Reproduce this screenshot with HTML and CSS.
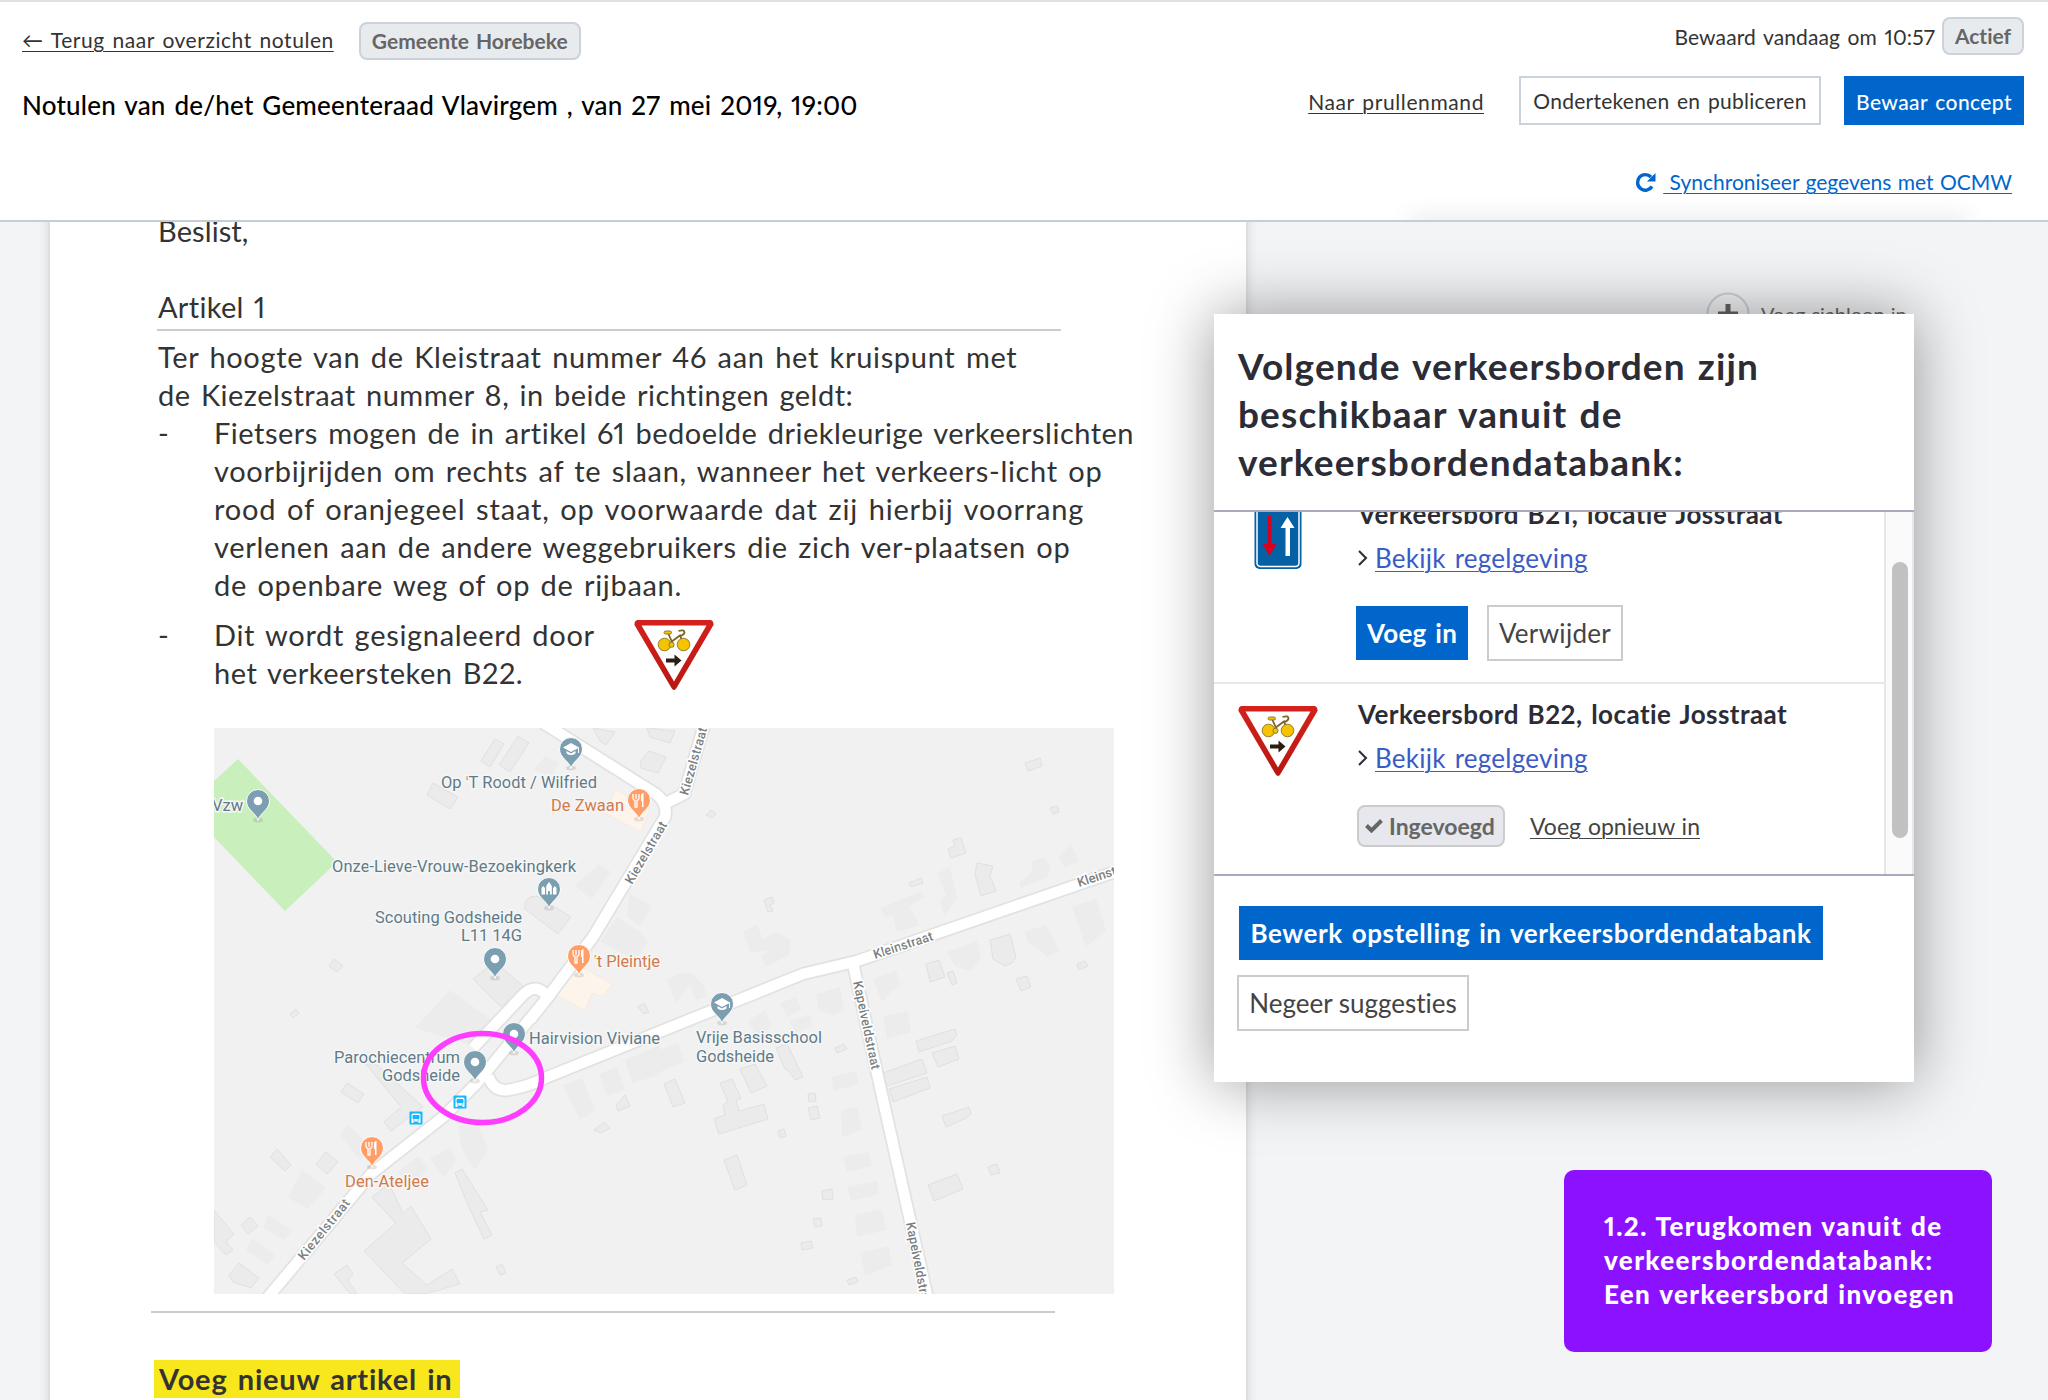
FILE: index.html
```html
<!DOCTYPE html>
<html lang="nl">
<head>
    <meta charset="UTF-8">
    <meta name="viewport" content="width=device-width, initial-scale=1.0">
    <title>Notulen - Gemeenteraad Vlavirgem</title>
    <link rel="stylesheet" href="styles.css">
</head>
<body>
    <!-- Shared drawings -->
    <svg class="defs" width="0" height="0">
        <defs>
            <linearGradient id="signRed" x1="0" y1="0" x2="0" y2="1">
                <stop offset="0" stop-color="#d4211c"/>
                <stop offset="1" stop-color="#b81712"/>
            </linearGradient>
            <symbol id="b22" viewBox="0 0 80 70">
                <path d="M3 0H77Q80 1 79.500 5L42.500 68Q40 72 37.500 68L.5 5Q0 1 3 0Z" fill="url(#signRed)"/>
                <path d="M7.500 5.500H72.500L40 61.500Z" fill="#fff"/>
                <g fill="#f5c400" stroke="#7d6420" stroke-width=".8">
                    <path d="M34.500 14L38.500 23M37 22L46 15.500L49.500 24" fill="none" stroke-width="1.800"/>
                    <circle cx="30.500" cy="24.500" r="6.300"/>
                    <circle cx="49.500" cy="24.500" r="6.300"/>
                    <circle cx="37.500" cy="24.800" r="2.600"/>
                    <rect x="30" y="11" width="7.500" height="3" rx="1.500"/>
                    <path d="M44.500 11Q50.500 9 50.500 12.500Q50 15 46 16" fill="none" stroke-width="1.800"/>
                </g>
                <path d="M32 38.500H40.500V34.500L47.500 40.500L40.500 46.500V42.500H32Z" fill="#2b1d12"/>
            </symbol>
            <symbol id="b21" viewBox="0 0 47 70">
                <rect width="47" height="70" rx="5" fill="#0560a5"/>
                <rect x="2.500" y="2.500" width="42" height="65" rx="3.500" fill="none" stroke="#fff" stroke-width="1.500"/>
                <path d="M13 17H17V45H22L15 57L8 45H13Z" fill="#d8001f"/>
                <path d="M31 57H35.500V29H40L33 18L26 29H31Z" fill="#fff"/>
            </symbol>
            <symbol id="pin" viewBox="-14 -14 28 38" overflow="visible">
                <ellipse cx="0" cy="19" rx="5" ry="2.500" fill="#000" opacity=".1"/>
                <path d="M0 19.500C-1.500 12 -11.500 9 -11.500 0A11.500 11.500 0 1 1 11.500 0C11.500 9 1.500 12 0 19.500Z" stroke="#fff" stroke-width="1"/>
            </symbol>
            <g id="dot"><use href="#pin" x="-14" y="-14" width="28" height="38" fill="#7b9eb0"/><circle r="4.300" fill="#fff"/></g>
            <g id="school">
                <use href="#pin" x="-14" y="-14" width="28" height="38" fill="#7b9eb0"/>
                <path d="M-8 -1.500L0 -6L8 -1.500V4H7V-.8L0 3Z" fill="#fff"/>
                <path d="M-4.500 2V4.500Q0 7.500 4.500 4.500V2L0 4.500Z" fill="#fff"/>
            </g>
            <g id="food">
                <use href="#pin" x="-14" y="-14" width="28" height="38" fill="#ff9e67"/>
                <path d="M-6 -6V-2Q-6 0 -4 .5V7H-2V.5Q0 0 0 -2V-6M-3 -6V-1" fill="none" stroke="#fff" stroke-width="1.300"/>
                <path d="M2 -4Q2 -7 4.500 -7V7H3V1H2Z" fill="#fff"/>
            </g>
            <g id="church">
                <use href="#pin" x="-14" y="-14" width="28" height="38" fill="#7b9eb0"/>
                <path d="M-7.500 5.500V-1L-6 -3L-4 -1V5.500ZM-2.800 5.500V-3L0 -7L2.800 -3V5.500H1V2H-1V5.500ZM4 5.500V-1L6 -3L7.500 -1V5.500Z" fill="#fff"/>
            </g>
            <g id="bus">
                <rect x="-6.500" y="-6.500" width="13" height="13" rx="1" fill="#15b7ff"/>
                <path d="M-4.500 5V-3Q-4.500 -4.500 -3 -4.500H3Q4.500 -4.500 4.500 -3V5H2.500V3.500H-2.500V5Z" fill="#fff"/>
                <path d="M-3 -2.500H3V.5H-3ZM-3 2H-1.500M1.500 2H3" fill="#15b7ff" stroke="#15b7ff"/>
            </g>
        </defs>
    </svg>

    <header class="topbar">
        <div class="topbar-left">
            <div class="crumbs">
                <a href="#" class="back">← Terug naar overzicht notulen</a>
                <span class="badge badge-town">Gemeente Horebeke</span>
            </div>
            <h1>Notulen van de/het Gemeenteraad Vlavirgem , van 27 mei 2019, 19:00</h1>
        </div>
        <div class="topbar-right">
            <div class="status">
                <span class="saved">Bewaard vandaag om 10:57</span>
                <span class="badge badge-status">Actief</span>
            </div>
            <div class="actions">
                <a href="#" class="trash">Naar prullenmand</a>
                <button class="btn-sign">Ondertekenen en publiceren</button>
                <button class="btn-save">Bewaar concept</button>
            </div>
            <div class="sync">
                <svg width="21" height="21" viewBox="0 0 21 21">
                    <path d="M17 14.500A7.800 7.800 0 1 1 16 5" fill="none" stroke="#0066cc" stroke-width="3.400"/>
                    <path d="M20.500 1V9.500H12Z" fill="#0066cc"/>
                </svg>
                <a href="#">&nbsp;Synchroniseer gegevens met OCMW</a>
            </div>
        </div>
    </header>

    <main class="workspace">
        <article class="document">
            <p class="decides">Beslist,</p>
            <h2>Artikel 1</h2>
            <p class="intro">Ter hoogte van de Kleistraat nummer 46 aan het kruispunt met<br><span class="tight">de Kiezelstraat nummer 8, in beide richtingen geldt:</span></p>
            <ul>
                <li><span class="tight">Fietsers mogen de in artikel 61 bedoelde driekleurige verkeerslichten</span><br>voorbijrijden om rechts af te slaan, wanneer het verkeers-licht op<br><span class="loose">rood of oranjegeel staat, op voorwaarde dat zij hierbij voorrang</span><br>verlenen aan de andere weggebruikers die zich ver-plaatsen op<br>de openbare weg of op de rijbaan.</li>
                <li class="signal">
                    <p>Dit wordt gesignaleerd door<br><span class="tight">het verkeersteken B22.</span></p>
                    <svg width="80" height="70"><use href="#b22"/></svg>
                </li>
            </ul>

            <svg class="map" width="900" height="566" viewBox="214 728 900 566">
                <rect x="214" y="728" width="900" height="566" fill="#f1f1f1"/>
                <path d="M214 781L238 759L337 862L285 911L214 837Z" fill="#c9efbc"/>
                <path class="shop" d="M616 790L650 808L641 832L604 813ZM556 995L580 966L612 984L602 997L592 993L585 1011L573 1004Z"/>
                <path class="building-soft" d="M545 756L559 762L552 775L533 771ZM576 884L599 864L611 872L592 899L577 888ZM629 893L652 906L640 926L627 917ZM617 917L640 932L648 942L636 960L600 942ZM415 1028L450 990L492 1020L470 1045ZM348 1125L372 1148L360 1160L340 1135ZM302 1170L326 1188L308 1209L288 1198ZM268 1214L292 1231L284 1240L264 1228ZM252 1238L275 1255L268 1265L246 1250ZM398 1172L418 1156L428 1168L410 1190ZM430 1158L450 1148L456 1160L444 1178ZM458 1126L478 1124L488 1150L475 1170L462 1150ZM743 931L757 924L763 940L775 932L791 940L789 955L766 967L761 956L768 950L751 953ZM667 979L682 973L693 974L704 986L707 997L696 1000L690 985L676 1003ZM880 908L920 892L925 897L909 906L920 925L897 932L893 915L885 917ZM937 873L950 867L957 898L944 916L940 901L946 895ZM1020 882L1032 872L1032 861L1045 857L1051 868L1046 878L1020 888ZM1059 858L1071 843L1079 862L1065 867ZM947 952L977 941L981 959L970 971L955 966ZM1024 931L1046 925L1060 951L1047 957L1036 947L1028 942ZM1072 907L1096 899L1106 930L1086 947ZM873 979L896 971L900 986L891 992L882 1002ZM816 994L840 987L844 1010L833 1015L819 1011ZM780 1003L796 997L802 1009L787 1017ZM748 1021L765 1010L772 1026L757 1037ZM790 1020L810 1015L812 1026L795 1033ZM883 1016L908 1011L911 1032L887 1039ZM831 1077L856 1071L859 1084L834 1091ZM841 1110L857 1107L862 1130L842 1137ZM843 1157L869 1152L872 1166L847 1172ZM847 1187L877 1181L879 1194L851 1201ZM855 1215L882 1209L886 1230L857 1237ZM860 1253L889 1246L892 1265L865 1276ZM563 1085L582 1078L595 1110L580 1120ZM599 1074L617 1067L625 1090L607 1096ZM625 1060L660 1045L660 1075L632 1083ZM660 1050L678 1043L684 1062L660 1072Z"/>
                <path class="building" d="M481 761L495 739L504 744L490 767ZM499 765L518 736L529 743L510 772ZM427 795L433 783L458 797L450 809ZM593 728L615 732L606 745L600 741ZM647 728L675 731L670 743L650 737ZM640 762L649 751L666 757L658 773L641 768ZM1025 763L1040 758L1042 766L1028 771ZM1050 808L1057 806L1059 812L1053 814ZM948 849L955 846L953 840L961 838L966 853L951 858ZM977 863L993 866L990 876L996 891L981 896L975 874ZM909 883L921 878L923 883L911 887ZM764 900L772 897L774 903L770 905L773 911L768 912ZM706 815L711 810L716 814L712 818ZM329 966L334 959L343 966L337 972ZM290 1014L296 1009L299 1013L293 1018ZM473 979L495 962L523 986L501 1007ZM525 909Q523 896 537 896L571 917L558 934ZM341 1092L347 1083L364 1094L358 1103ZM366 1064L376 1064L423 1107L391 1131L384 1122L401 1107ZM270 1157L277 1149L291 1165L285 1171ZM316 1164L326 1152L338 1162L327 1174ZM241 1225L250 1217L258 1226L248 1234ZM214 1210L234 1234L226 1242L233 1250L226 1255L214 1242ZM229 1275L239 1263L259 1278L251 1288L233 1282ZM334 1274L347 1265L353 1274L348 1280L357 1294H350L342 1284ZM372 1197L389 1184L403 1213L411 1206L431 1239L402 1263L427 1285L452 1269L460 1284L425 1294H405L364 1251L396 1223ZM455 1173L462 1169L488 1210L480 1212L492 1235L484 1239L468 1205ZM496 1267L502 1264L506 1273L500 1275ZM594 1130L604 1122L610 1128L601 1133ZM616 1105L625 1095L630 1106L618 1111ZM638 1007L644 1003L649 1012L644 1014ZM664 1084L675 1079L685 1103L673 1107ZM720 1083L732 1079L741 1098L736 1101L739 1111L764 1104L768 1119L719 1134L714 1119L725 1115L723 1105L728 1102ZM740 1069L755 1064L767 1086L751 1093ZM776 1048L787 1044L803 1077L795 1080L788 1070L785 1069ZM724 1160L737 1155L747 1185L735 1190ZM835 1048L844 1044L847 1049L837 1053ZM808 1094L815 1093L816 1101L809 1102ZM808 1108L817 1106L820 1118L811 1120ZM778 1131L784 1129L786 1136L780 1138ZM822 1191L832 1189L833 1199L823 1200ZM813 1219L821 1218L822 1226L815 1227ZM801 1243L811 1241L813 1248L802 1250ZM847 1280L856 1277L858 1282L849 1285ZM990 940L1010 934L1016 957L1012 963L1005 966L993 959ZM926 964L939 960L945 977L930 982ZM947 973L953 971L957 983L952 985ZM1016 979L1027 976L1031 987L1021 991ZM1077 964L1085 961L1088 966L1079 970ZM916 1041L955 1029L957 1035L952 1041L919 1052ZM932 1053L955 1046L959 1059L938 1067ZM883 1073L922 1059L927 1073L887 1086ZM889 1089L927 1077L930 1088L893 1102ZM942 1116L969 1107L971 1114L966 1118L946 1127ZM928 1185L957 1174L963 1189L934 1201ZM988 1167L997 1164L1000 1173L991 1175Z"/>
                <g class="road-edge">
                    <path id="kiezel" d="M540 721L656 794Q668 803 665 817L593 937L548 997L477 1083L443 1117L372 1173L264 1302"/>
                    <path id="kiezelNorth" d="M664 804L684 794L705 722"/>
                    <path id="loop" d="M473 1048L524 994Q536 982 548 997L530 1020"/>
                    <path id="klein" d="M488 1076Q494 1092 508 1090Q530 1086 545 1078L803 974L857 961L1120 870"/>
                    <path id="kapel" d="M853 963L877 1073L910 1220L929 1304"/>
                </g>
                <g class="road">
                    <use href="#kiezel"/><use href="#kiezelNorth"/><use href="#loop"/><use href="#klein"/><use href="#kapel"/>
                </g>
                <g class="street">
                    <text transform="translate(304 1261) rotate(-51)" textLength="74">Kiezelstraat</text>
                    <text transform="translate(632 885) rotate(-59.500)" textLength="70">Kiezelstraat</text>
                    <text transform="translate(688 796) rotate(-74)" textLength="70">Kiezelstraat</text>
                    <text transform="translate(875 959) rotate(-18)" textLength="62">Kleinstraat</text>
                    <text transform="translate(1079 887) rotate(-18)">Kleinstraat</text>
                    <text transform="translate(853 982) rotate(78)" textLength="90">Kapelveldstraat</text>
                    <text transform="translate(906 1223) rotate(79)" textLength="90">Kapelveldstraat</text>
                </g>
                <use href="#dot" x="258" y="801"/>
                <use href="#school" x="571" y="749"/>
                <use href="#food" x="639" y="800"/>
                <use href="#church" x="549" y="889"/>
                <use href="#dot" x="495" y="959"/>
                <use href="#food" x="579" y="956"/>
                <use href="#dot" x="514" y="1034"/>
                <use href="#dot" x="475" y="1062"/>
                <use href="#food" x="372" y="1148"/>
                <use href="#school" x="722" y="1004"/>
                <use href="#bus" x="460" y="1102"/>
                <use href="#bus" x="416" y="1118"/>
                <g class="place">
                    <text x="212" y="811">Vzw</text>
                    <text x="441" y="788" textLength="156">Op 'T Roodt / Wilfried</text>
                    <text x="332" y="872" textLength="244">Onze-Lieve-Vrouw-Bezoekingkerk</text>
                    <text x="375" y="923" textLength="147">Scouting Godsheide</text>
                    <text x="461" y="941" textLength="61">L11 14G</text>
                    <text x="529" y="1044" textLength="131">Hairvision Viviane</text>
                    <text x="334" y="1063" textLength="126">Parochiecentrum</text>
                    <text x="382" y="1081" textLength="78">Godsheide</text>
                    <text x="696" y="1043" textLength="126">Vrije Basisschool</text>
                    <text x="696" y="1062" textLength="78">Godsheide</text>
                </g>
                <g class="place place-food">
                    <text x="551" y="811" textLength="73">De Zwaan</text>
                    <text x="594" y="967" textLength="66">'t Pleintje</text>
                    <text x="345" y="1187" textLength="84">Den-Ateljee</text>
                </g>
                <ellipse cx="482.500" cy="1078" rx="59" ry="44.500" fill="none" stroke="#ff3dff" stroke-width="5.500"/>
            </svg>

            <hr>
            <mark>Voeg nieuw artikel in</mark>
        </article>

        <aside class="tools">
            <button class="template">
                <svg width="44" height="44" viewBox="0 0 44 44">
                    <circle cx="22" cy="22" r="20.500" fill="#f3f4f6" stroke="#cbd2da" stroke-width="2"/>
                    <path d="M22 12V32M12 22H32" stroke="#666" stroke-width="5"/>
                </svg>
                <span>Voeg sjabloon in</span>
            </button>
        </aside>
    </main>

    <section class="panel">
        <h3>Volgende verkeersborden zijn<br>beschikbaar vanuit de<br>verkeersbordendatabank:</h3>
        <div class="list">
            <div class="items">
                <div class="item">
                    <svg class="item-sign item-b21" width="80" height="70"><use href="#b21"/></svg>
                    <div>
                        <h4>Verkeersbord B21, locatie Josstraat</h4>
                        <p class="rules">
                            <svg width="10" height="16" viewBox="0 0 10 16"><path d="M1 1L8 8L1 15" fill="none" stroke="#2b2c35" stroke-width="2"/></svg>
                            <a href="#">Bekijk regelgeving</a>
                        </p>
                        <div class="item-buttons">
                            <button class="btn-primary">Voeg in</button>
                            <button class="btn-plain remove">Verwijder</button>
                        </div>
                    </div>
                </div>
                <div class="item">
                    <svg class="item-sign" width="80" height="70"><use href="#b22"/></svg>
                    <div>
                        <h4>Verkeersbord B22, locatie Josstraat</h4>
                        <p class="rules">
                            <svg width="10" height="16" viewBox="0 0 10 16"><path d="M1 1L8 8L1 15" fill="none" stroke="#2b2c35" stroke-width="2"/></svg>
                            <a href="#">Bekijk regelgeving</a>
                        </p>
                        <div class="item-buttons done">
                            <span class="inserted">
                                <svg width="18" height="14" viewBox="0 0 18 14"><path d="M1.500 6.500L6.500 11.500L16.500 1.500" fill="none" stroke="#666" stroke-width="4"/></svg>
                                <span>Ingevoegd</span>
                            </span>
                            <a href="#" class="again">Voeg opnieuw in</a>
                        </div>
                    </div>
                </div>
            </div>
            <div class="scrollbar"><div class="thumb"></div></div>
        </div>
        <div class="panel-footer">
            <button class="btn-primary edit">Bewerk opstelling in verkeersbordendatabank</button>
            <button class="btn-plain ignore">Negeer suggesties</button>
        </div>
    </section>

    <div class="note">1.2. Terugkomen vanuit de<br>verkeersbordendatabank:<br>Een verkeersbord invoegen</div>
</body>
</html>
```
FILE: styles.css
```css
* {
    box-sizing: border-box;
}

body {
    margin: 0;
    width: 2048px;
    height: 1400px;
    overflow: hidden;
    position: relative;
    font-family: Lato, "Open Sans", sans-serif;
    font-size: 21px;
    font-variant-ligatures: none;
    font-variant-numeric: proportional-nums;
    word-spacing: 2px;
    color: #333;
    background: #f3f4f6;
}

h1, h2, h3, h4, p, ul {
    margin: 0;
    padding: 0;
    font-weight: normal;
}

a {
    color: inherit;
    text-underline-offset: 3px;
    text-decoration-thickness: 1px;
}

button {
    font: inherit;
    color: inherit;
    letter-spacing: inherit;
    word-spacing: inherit;
    padding: 0;
    white-space: nowrap;
    cursor: pointer;
}

.defs {
    position: absolute;
}

/* Top bar */
.topbar {
    position: relative;
    display: flex;
    justify-content: space-between;
    height: 222px;
    padding: 0 24px 0 22px;
    background: #fff;
    border-top: 2px solid #dde2e6;
    border-bottom: 2px solid #c5ced5;
    overflow: hidden;
}

/* faint shade along the lower edge */
.topbar::after {
    content: "";
    position: absolute;
    left: 1410px;
    right: 80px;
    top: 100%;
    height: 10px;
    box-shadow: 0 0 24px rgba(0, 0, 0, 0.16);
}

.crumbs {
    display: flex;
    align-items: center;
    gap: 25px;
    height: 38px;
    margin-top: 20px;
}

.back {
    padding-bottom: 4px;
    letter-spacing: 0.53px;
}

.badge {
    height: 38px;
    line-height: 34px;
    text-align: center;
    font-weight: bold;
    color: #666;
    background: #e8ebee;
    border: 2px solid #cbd2da;
    border-radius: 8px;
}

.badge-town {
    width: 222px;
}

.badge-status {
    width: 82px;
}

h1 {
    margin-top: 27px;
    font-size: 26px;
    line-height: 36px;
    font-weight: 500;
    letter-spacing: 0.22px;
    color: #000;
}

.topbar-right {
    display: flex;
    flex-direction: column;
    align-items: flex-end;
}

.status {
    display: flex;
    align-items: center;
    gap: 7px;
    margin-top: 15px;
}

.saved {
    padding-top: 1px;
    letter-spacing: 0.12px;
}

.actions {
    display: flex;
    align-items: center;
    height: 49px;
    margin-top: 21px;
    letter-spacing: 0.4px;
}

.trash {
    padding-top: 2px;
    letter-spacing: 0.6px;
}

.btn-sign {
    width: 302px;
    height: 49px;
    margin: 0 23px 0 35px;
    letter-spacing: 0.25px;
    background: #fff;
    border: 2px solid #cbd2da;
}

.btn-save {
    width: 180px;
    height: 49px;
    padding-top: 2px;
    font-weight: 500;
    color: #fff;
    background: #0066cc;
    border: none;
}

.sync {
    display: flex;
    align-items: center;
    gap: 7px;
    margin: 42px 12px 0 0;
    line-height: 30px;
    word-spacing: 1px;
    color: #0066cc;
}

/* Document */
.workspace {
    display: flex;
    height: 1178px;
    overflow: hidden;
}

.document {
    width: 1200px;
    height: 1300px;
    margin: -10px 0 0 48px;
    padding: 0 0 0 108px;
    flex-shrink: 0;
    background: #fff;
    border: solid #dcdfe3;
    border-width: 0 2px;
    box-shadow: 0 0 10px rgba(0, 0, 0, 0.12);
    font-size: 29px;
    line-height: 38px;
    letter-spacing: 0.68px;
    word-spacing: 2.4px;
}

.decides {
    letter-spacing: 0.1px;
}

h2 {
    width: 904px;
    height: 43px;
    margin: 38px 0 0 -1px;
    padding-left: 1px;
    font-size: inherit;
    letter-spacing: 0.3px;
    border-bottom: 2px solid #ccc;
}

.intro {
    margin-top: 7px;
}

ul {
    list-style: none;
}

li {
    position: relative;
    padding-left: 56px;
    white-space: nowrap;
}

li::before {
    content: "-";
    position: absolute;
    left: 0;
}

.tight {
    letter-spacing: 0.5px;
}

.loose {
    letter-spacing: 0.83px;
}

.signal {
    display: flex;
    margin-top: 12px;
}

.signal p {
    width: 420px;
}

.signal svg {
    margin-top: 4px;
}

.map {
    display: block;
    margin: 36px 0 0 56px;
    letter-spacing: 0;
    word-spacing: 0;
}

.building {
    fill: #ebebeb;
    stroke: #e0e0e0;
}

.building-soft {
    fill: #ececec;
}

.shop {
    fill: #fdf4ec;
    stroke: #f9ebdd;
}

.road-edge {
    fill: none;
    stroke: #e2e2e2;
    stroke-width: 14px;
}

.road use {
    fill: none;
    stroke: #fff;
    stroke-width: 10.5px;
}

.street {
    font: 500 13px Roboto, sans-serif;
    fill: #7b7f81;
    stroke: #fff;
    stroke-width: 3px;
    paint-order: stroke;
}

.place {
    font: 16.5px Roboto, sans-serif;
    fill: #5f7b88;
    stroke: #f6f6f6;
    stroke-width: 3px;
    paint-order: stroke;
}

.place-food {
    fill: #d17a4b;
}

hr {
    width: 904px;
    height: 2px;
    margin: 17px 0 0 -7px;
    background: #ccc;
    border: none;
}

mark {
    display: block;
    width: 306px;
    height: 38px;
    margin: 47px 0 0 -4px;
    padding-left: 5px;
    font-weight: bold;
    letter-spacing: 0.8px;
    color: #333;
    background: #f8e71c;
    white-space: nowrap;
}

.tools {
    padding: 70px 0 0 458px;
}

.template {
    display: flex;
    align-items: center;
    gap: 11px;
    font-size: 20px;
    word-spacing: 1px;
    color: #666;
    background: none;
    border: none;
}

/* Traffic sign panel */
.panel {
    position: absolute;
    left: 1214px;
    top: 314px;
    width: 700px;
    height: 768px;
    background: #fff;
    box-shadow: 0 0 60px rgba(0, 0, 0, 0.4);
    color: #2b2c35;
}

h3 {
    height: 198px;
    padding: 28px 24px 0;
    font-size: 37px;
    line-height: 48px;
    font-weight: bold;
    letter-spacing: 1.12px;
    border-bottom: 2px solid #aaaabf;
}

.list {
    display: flex;
    height: 364px;
    overflow: hidden;
    border-bottom: 2px solid #aaaabf;
}

.items {
    flex: 1;
    margin-top: -28px;
}

.item {
    display: flex;
    gap: 39px;
    height: 200px;
    padding-left: 24px;
    border-bottom: 2px solid #e6e6ec;
}

.item-sign {
    margin-top: 22px;
}

.item-b21 {
    margin-top: 15px;
}

h4 {
    margin: 15px 0 0 1px;
    font-size: 26px;
    line-height: 30px;
    font-weight: bold;
    letter-spacing: 0.45px;
}

.rules {
    display: flex;
    align-items: center;
    gap: 7px;
    margin: 14px 0 0 1px;
    font-size: 26px;
    line-height: 30px;
    letter-spacing: 0.25px;
}

.rules a {
    color: #3b5bc6;
}

.item-buttons {
    display: flex;
    align-items: center;
    gap: 19px;
    height: 56px;
    margin-top: 32px;
    font-size: 26px;
    letter-spacing: 0.3px;
    color: #444;
}

.btn-primary {
    height: 54px;
    font-weight: bold;
    color: #fff;
    background: #0066cc;
    border: none;
}

.btn-plain {
    height: 56px;
    background: #fff;
    border: 2px solid #ccc;
}

.item-buttons .btn-primary {
    width: 112px;
    margin-left: -1px;
}

.remove {
    width: 136px;
}

.done {
    gap: 25px;
    margin-top: 25px;
    font-size: 23px;
    letter-spacing: 0;
    word-spacing: 1px;
}

.inserted {
    display: flex;
    align-items: center;
    gap: 6px;
    width: 148px;
    height: 42px;
    padding-left: 6px;
    font-weight: bold;
    color: #666;
    background: #e7e7ee;
    border: 2px solid #ccc;
    border-radius: 8px;
}

.scrollbar {
    width: 30px;
    padding: 50px 0 0 6px;
    background: #fafafa;
    border: solid #e6e6ea;
    border-width: 0 2px;
}

.thumb {
    width: 16px;
    height: 276px;
    background: #c1c1c1;
    border-radius: 8px;
}

.panel-footer {
    display: flex;
    flex-direction: column;
    align-items: flex-start;
    gap: 15px;
    padding: 30px 0 0 23px;
    font-size: 26px;
    color: #444;
}

.edit {
    width: 584px;
    margin-left: 2px;
    letter-spacing: 0.6px;
}

.ignore {
    width: 232px;
    word-spacing: 0;
}

.note {
    position: absolute;
    left: 1564px;
    top: 1170px;
    width: 428px;
    height: 182px;
    padding: 39px 0 0 40px;
    font-size: 26px;
    line-height: 34px;
    font-weight: 900;
    letter-spacing: 1.38px;
    word-spacing: 1px;
    color: #fff;
    background: #8c12ff;
    border-radius: 10px;
    white-space: nowrap;
}
```
